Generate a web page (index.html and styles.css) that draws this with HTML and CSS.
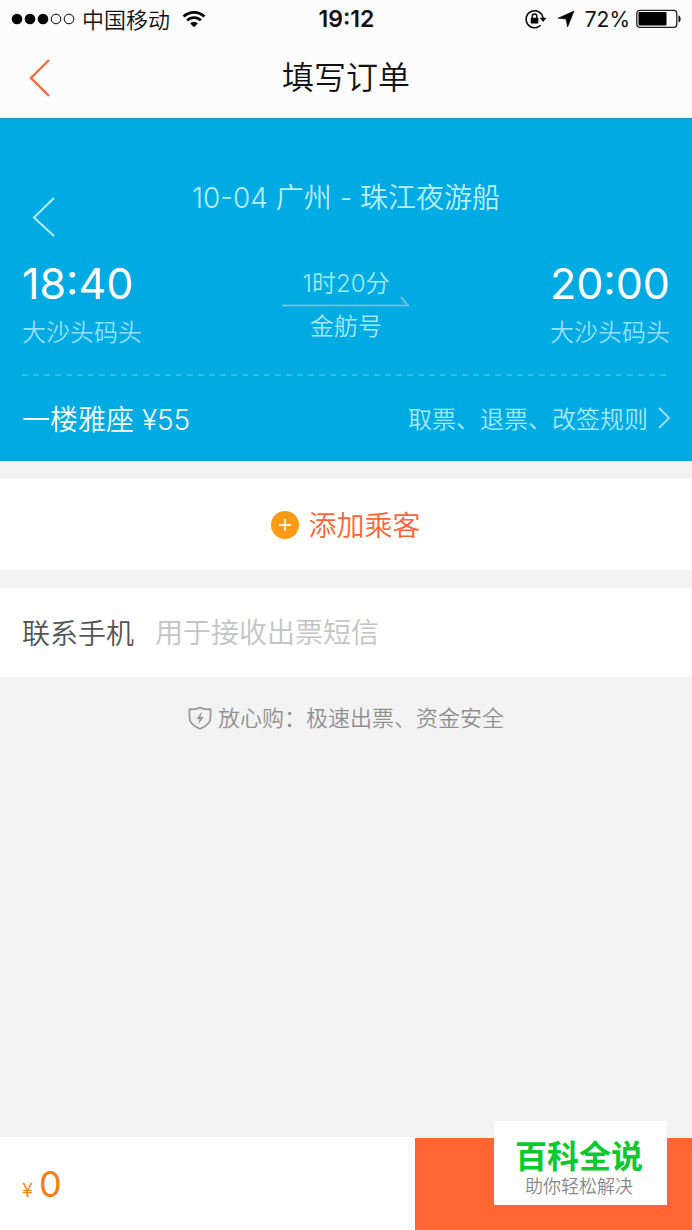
FILE: index.html
```html
<!DOCTYPE html>
<html lang="zh-CN">
<head>
<meta charset="utf-8">
<meta name="viewport" content="width=device-width, initial-scale=1">
<title>填写订单</title>
<link rel="stylesheet" href="styles.css">
</head>
<body>
<div class="page">
  <div class="status">
    <div class="status-left">
      <svg class="signal" width="64" height="12" viewBox="0 0 64 12" aria-hidden="true">
        <circle cx="6" cy="6" r="5.3"/><circle cx="19" cy="6" r="5.3"/><circle cx="32" cy="6" r="5.3"/>
        <g fill="none" stroke="#000"><circle cx="45" cy="6" r="4.8"/><circle cx="58" cy="6" r="4.8"/></g>
      </svg>
      <span>中国移动</span>
      <svg width="24" height="18" viewBox="0 0 24 18" aria-hidden="true">
        <g fill="none" stroke="#000" stroke-width="2.7"><path d="M1.6 6.5a15 15 0 0 1 20.8 0"/><path d="M5.2 10.4a9.8 9.8 0 0 1 13.6 0"/></g>
        <path d="M8.2 13.4a5.4 5.4 0 0 1 7.6 0L12 17.3z"/>
      </svg>
    </div>
    <span class="clock">19:12</span>
    <div class="status-right">
      <svg width="22" height="20" viewBox="0 0 22 20" aria-hidden="true">
        <path d="M15.6 16.2A8.5 8.5 0 1 1 18 9" fill="none" stroke="#000" stroke-width="1.5"/>
        <path d="M14.7 8.7h6.8L18.1 13z"/><rect x="5.7" y="8.8" width="7.6" height="5.6" rx=".6"/>
        <path d="M7.2 9V7.3a2.3 2.3 0 0 1 4.6 0V9" fill="none" stroke="#000" stroke-width="1.4"/>
      </svg>
      <svg class="locate" width="18" height="18" viewBox="0 0 18 18" aria-hidden="true"><path d="M17 1 10.600 17 9 9 1 8.200z" stroke="#000" stroke-width=".6"/></svg>
      <span class="percent">72%</span>
      <svg width="46" height="20" viewBox="0 0 46 20" aria-hidden="true">
        <rect x=".8" y="1.3" width="40" height="17" rx="3" fill="none" stroke="#222" stroke-width="1.3"/>
        <rect x="2.5" y="3" width="28" height="13.6" rx="1"/><path d="M42.5 6.5c2.8.3 2.8 6.7 0 7z"/>
      </svg>
    </div>
  </div>
  <header class="nav">
    <button class="icon-button" aria-label="返回">
      <svg width="22" height="38" viewBox="0 0 22 38"><path d="M21 1 3 19l18 18" fill="none" stroke="#f26d3d" stroke-width="2.400"/></svg>
    </button>
    <h1 class="nav-title">填写订单</h1>
  </header>
  <main class="content">
    <section class="trip">
      <div class="trip-head">
        <button class="icon-button trip-back" aria-label="上一页">
          <svg width="24" height="40" viewBox="0 0 24 40"><path d="M22 1 2 20.500 22 39" fill="none" stroke="#b5efff" stroke-width="2"/></svg>
        </button>
        <h2 class="trip-title">10-04 广州 - 珠江夜游船</h2>
      </div>
      <div class="route">
        <div class="stop"><span class="time">18:40</span><span class="place">大沙头码头</span></div>
        <div class="leg">
          <span>1时20分</span>
          <svg width="128" height="12" viewBox="0 0 128 12" aria-hidden="true"><path d="M0 9.500h126L119 1" fill="none" stroke="#69bfe3" stroke-width="2"/></svg>
          <span>金舫号</span>
        </div>
        <div class="stop stop-end"><span class="time">20:00</span><span class="place">大沙头码头</span></div>
      </div>
      <svg class="divider" height="2" aria-hidden="true"><line x1="0" y1="1" x2="100%" y2="1" stroke="#45c4ec" stroke-width="1.500" stroke-dasharray="6 5"/></svg>
      <div class="fare">
        <span class="seat">一楼雅座 ¥55</span>
        <a class="rules" href="#rules">取票、退票、改签规则
          <svg width="12" height="22" viewBox="0 0 12 22" aria-hidden="true"><path d="m1 1 10 10L1 21" fill="none" stroke="#9adcf5" stroke-width="2"/></svg>
        </a>
      </div>
    </section>
    <button class="add">
      <svg width="28" height="28" viewBox="0 0 28 28" aria-hidden="true"><circle cx="14" cy="14" r="14" fill="#fd9a16"/><path d="M14 8v12M8 14h12" stroke="#fff3dc" stroke-width="1.800"/></svg>
      <span>添加乘客</span>
    </button>
    <div class="field">
      <label for="phone">联系手机</label>
      <input id="phone" type="tel" placeholder="用于接收出票短信">
    </div>
    <p class="assure">
      <svg width="24" height="24" viewBox="0 0 24 24" aria-hidden="true"><path d="M12 1.500C9 3.300 5.500 3.600 1.500 3.200v8.300c0 5.500 4.500 9 10.500 11.300 6-2.300 10.500-5.800 10.500-11.300V3.200C18.500 3.600 15 3.300 12 1.500z" fill="none" stroke="#999" stroke-width="1.800"/><path d="M13.800 5.500 8.500 13h3l-1.200 5.500L15.600 11h-3z" fill="#999"/></svg>
      放心购：极速出票、资金安全
    </p>
  </main>
  <footer class="bar">
    <div class="total"><span class="currency">¥</span><span class="amount">0</span></div>
    <button class="submit" aria-label="提交订单"></button>
    <div class="badge"><strong>百科全说</strong><span>助你轻松解决</span></div>
  </footer>
</div>
</body>
</html>
```
FILE: styles.css
```css
* { box-sizing: border-box; }
body {
  margin: 0;
  font-family: Inter, "Noto Sans CJK SC", sans-serif;
  font-weight: 350;
  background: #f3f3f3;
  color: #111;
}
button { border: 0; padding: 0; background: none; font: inherit; cursor: pointer; }
svg { display: block; flex: none; }
h1, h2, p { margin: 0; font-weight: inherit; }
.page { min-height: 100vh; display: flex; flex-direction: column; }

.status {
  display: grid;
  grid-template-columns: 1fr auto 1fr;
  align-items: center;
  height: 38px;
  padding: 0 10px 0 11px;
  background: #fcfcfc;
  font-size: 22px;
}
.status-left, .status-right { display: flex; align-items: center; }
.status-left { gap: 7px; }
.status-left span { margin-right: 5px; padding-bottom: 2px; }
.status-right { justify-content: flex-end; gap: 6px; }
.locate { margin: 0 4px; }
.percent { font-size: 21px; font-weight: 400; }
.clock { font-size: 23px; font-weight: 600; }

.nav {
  display: grid;
  grid-template-columns: 1fr auto 1fr;
  align-items: center;
  height: 81px;
  padding: 0 28px;
  background: #fcfcfc;
  border-bottom: 1px solid #1a93c0;
}
.icon-button { justify-self: start; }
.nav-title { font-size: 32px; line-height: 40px; }

.content { flex: 1; }
.trip { padding: 56px 22px 0; background: #00aae2; color: #b5f1ff; }
.trip-head {
  display: grid;
  grid-template-columns: 1fr auto 1fr;
  align-items: start;
  padding: 0 10px;
}
.trip-back { padding-top: 22px; }
.trip-title { font-size: 28px; line-height: 46px; }
.route { display: flex; justify-content: space-between; padding-top: 20px; }
.stop { display: flex; flex-direction: column; gap: 4px; }
.stop-end { align-items: flex-end; }
.time { font-size: 43px; line-height: 52px; font-weight: 400; color: #fff; }
.place { font-size: 24px; line-height: 40px; color: #8ee2fa; }
.leg { display: flex; flex-direction: column; align-items: center; padding-top: 15px; font-size: 24px; line-height: 24px; color: #a2e9fc; }
.leg svg { margin-bottom: 7px; }
.divider { width: 100%; margin-top: 21px; }
.fare { display: flex; align-items: center; justify-content: space-between; height: 85px; padding-bottom: 2px; }
.seat { font-size: 28px; color: #f0fdff; }
.rules { display: flex; align-items: center; gap: 10px; font-size: 24px; color: #a2e9fc; text-decoration: none; }

.add {
  display: flex;
  align-items: center;
  justify-content: center;
  gap: 9px;
  width: 100%;
  height: 91px;
  margin-top: 18px;
  background: #fff;
  color: #ff6538;
  font-size: 28px;
}
.add span { padding-bottom: 2px; }
.field {
  display: flex;
  align-items: center;
  gap: 21px;
  height: 89px;
  margin-top: 18px;
  padding: 0 22px;
  background: #fff;
  font-size: 28px;
}
.field label { color: #555; padding-bottom: 2px; }
.field input { flex: 1; min-width: 0; border: 0; padding: 0; outline: 0; font: inherit; color: #333; }
.field input::placeholder { color: #c4c4c4; opacity: 1; }
.assure {
  display: flex;
  align-items: center;
  justify-content: center;
  gap: 6px;
  padding-top: 24px;
  font-size: 22px;
  line-height: 34px;
  color: #909090;
}

.bar { position: relative; display: flex; height: 93px; background: #fff; }
.total { width: 60%; display: flex; align-items: baseline; gap: 6px; padding: 24px 22px 0; color: #f5800f; }
.currency { font-size: 20px; font-family: "Noto Sans CJK SC", sans-serif; }
.amount { font-size: 36px; line-height: 46px; font-weight: 400; }
.submit { width: 40%; background: #ff6633; border-top: 1px solid #f3f3f3; }
.badge {
  position: absolute;
  right: 25px;
  bottom: 25px;
  display: flex;
  flex-direction: column;
  align-items: center;
  width: 173px;
  padding: 16px 3px 7px 0;
  background: #fff;
  color: #888;
  font-size: 18px;
  line-height: 22px;
  white-space: nowrap;
}
.badge strong { font-size: 32px; line-height: 39px; font-weight: 700; color: #0bc92f; }
```
